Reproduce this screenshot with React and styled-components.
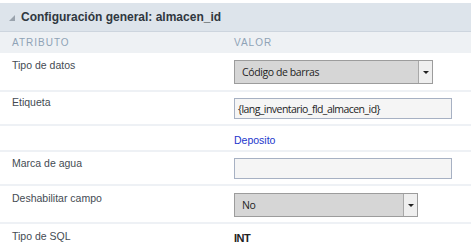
import React from 'react';
import styled, { createGlobalStyle } from 'styled-components';

const GlobalStyle = createGlobalStyle`
  html, body {
    margin: 0;
    padding: 0;
    background: #ffffff;
  }
  body {
    font-family: "Liberation Sans", Arial, sans-serif;
  }
`;

const Panel = styled.div`
  width: 471px;
  padding-top: 3px;
  box-sizing: border-box;
`;

const Header = styled.div`
  height: 29px;
  box-sizing: border-box;
  background: #dde4eb;
  border-bottom: 1px solid #cdd5de;
  display: flex;
  align-items: center;
  padding-left: 9px;
  gap: 6px;
  font-size: 12px;
  font-weight: bold;
  color: #2f3740;
`;

const Triangle = styled.span`
  width: 0;
  height: 0;
  border-left: 6px solid transparent;
  border-bottom: 6px solid #9aa3ad;
  margin-top: 2px;
`;

const ColumnHead = styled.div`
  display: grid;
  grid-template-columns: 222px 1fr;
  height: 21px;
  align-items: center;
  background: #eef1f4;
  padding-left: 12px;
  font-size: 10px;
  letter-spacing: 1px;
  color: #8fa3b6;
`;

const Row = styled.div`
  display: grid;
  grid-template-columns: 222px 1fr;
  height: ${p => p.h}px;
  padding-left: 12px;
  border-bottom: ${p => (p.last ? 'none' : '2px solid #eef1f5')};
  box-sizing: border-box;
`;

const Label = styled.div`
  font-size: 10.5px;
  color: #444b53;
  padding-top: ${p => p.pt}px;
`;

const Value = styled.div`
  padding-top: ${p => p.pt}px;
`;

const Select = styled.div`
  width: ${p => p.w}px;
  height: 24px;
  box-sizing: border-box;
  background: #d6d6d6;
  border: 1px solid #9c9c9c;
  display: flex;
  align-items: center;
  font-family: "Open Sans", sans-serif;
  font-size: 10.5px;
  letter-spacing: -0.4px;
  color: #1e1e1e;
`;

const SelectText = styled.span`
  flex: 1;
  padding-left: 7px;
`;

const Caret = styled.span`
  width: 13px;
  height: 22px;
  border-left: 1px solid #a8a8a8;
  background: #efefef;
  display: flex;
  align-items: center;
  justify-content: center;
  &::after {
    content: '';
    border-left: 3px solid transparent;
    border-right: 3px solid transparent;
    border-top: 3px solid #222;
  }
`;

const Input = styled.div`
  width: 218px;
  height: 21px;
  box-sizing: border-box;
  background: #f5f5f5;
  border: 1px solid #a7b1c3;
  display: flex;
  align-items: center;
  padding-left: 3px;
  font-family: "Open Sans", sans-serif;
  font-size: 10.5px;
  letter-spacing: -0.55px;
  color: #1e1e1e;
`;

const Link = styled.span`
  font-size: 10.5px;
  color: #2236cc;
`;

const Plain = styled.span`
  font-size: 11px;
  font-weight: bold;
  color: #222;
  letter-spacing: -0.5px;
`;

export default function App() {
  return (
    <>
      <GlobalStyle />
      <Panel>
        <Header>
          <Triangle />
          Configuración general: almacen_id
        </Header>
        <ColumnHead>
          <span>ATRIBUTO</span>
          <span>VALOR</span>
        </ColumnHead>
        <Row h={39}>
          <Label pt={6}>Tipo de datos</Label>
          <Value pt={7}>
            <Select w={199}>
              <SelectText>Código de barras</SelectText>
              <Caret />
            </Select>
          </Value>
        </Row>
        <Row h={34}>
          <Label pt={4}>Etiqueta</Label>
          <Value pt={6}>
            <Input>{'{lang_inventario_fld_almacen_id}'}</Input>
          </Value>
        </Row>
        <Row h={26}>
          <Label pt={4} />
          <Value pt={4}>
            <Link>Deposito</Link>
          </Value>
        </Row>
        <Row h={34}>
          <Label pt={5}>Marca de agua</Label>
          <Value pt={6}>
            <Input />
          </Value>
        </Row>
        <Row h={38}>
          <Label pt={6}>Deshabilitar campo</Label>
          <Value pt={7}>
            <Select w={184}>
              <SelectText>No</SelectText>
              <Caret />
            </Select>
          </Value>
        </Row>
        <Row h={24} last>
          <Label pt={6}>Tipo de SQL</Label>
          <Value pt={4}>
            <Plain>INT</Plain>
          </Value>
        </Row>
      </Panel>
    </>
  );
}
